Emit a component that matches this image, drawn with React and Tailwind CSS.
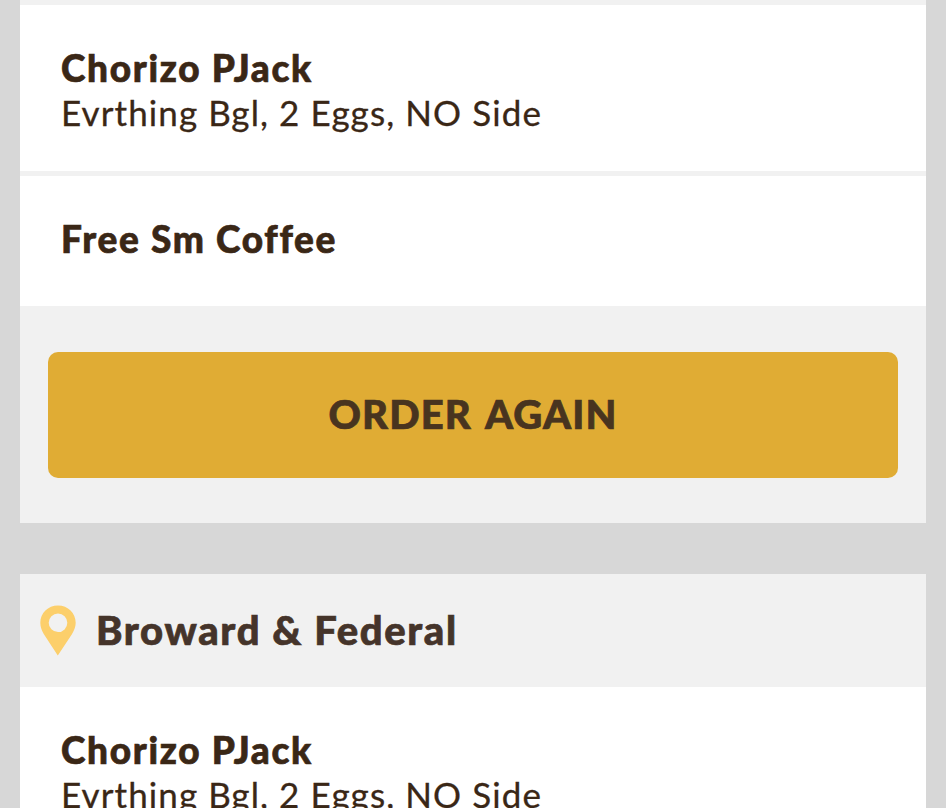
const orders = [
    {
        id: 1,
        items: [
            { name: "Chorizo PJack", details: "Evrthing Bgl, 2 Eggs, NO Side" },
            { name: "Free Sm Coffee" },
        ],
    },
    {
        id: 2,
        location: "Broward & Federal",
        items: [{ name: "Chorizo PJack", details: "Evrthing Bgl, 2 Eggs, NO Side" }],
    },
];

const PinIcon = () => (
    <svg viewBox="0 0 36 51" className="w-9 h-[51px] shrink-0" fill="#fccf6b">
        <path
            fillRule="evenodd"
            d="M18 .5C8 .5 .3 8 .3 17.8c0 4.200 1.500 7.800 3.600 11.400L17.800 50.500 31.900 29.200c2.100-3.600 3.800-7.200 3.800-11.400C35.700 8 28 .5 18 .5Zm0 8a9.300 9.300 0 1 1 0 18.600 9.300 9.300 0 0 1 0-18.600Z"
        />
    </svg>
);

const OrderItem = ({ item }) => (
    <div className="bg-white min-h-[130px] pl-[41px] pr-10 pt-[41px] pb-[37px]">
        <h3 className="text-[37px] leading-[44px] font-black tracking-[1.7px] [-webkit-text-stroke:0.7px]">
            {item.name}
        </h3>
        {item.details && (
            <p className="text-[35px] leading-[44px] tracking-[1.1px] [-webkit-text-stroke:0.3px]">{item.details}</p>
        )}
    </div>
);

const OrderCard = ({ order }) => (
    <section className="bg-[#f1f1f1]">
        {order.location && (
            <header className="flex items-center h-[113px] pl-5 gap-5 text-[#45342a]">
                <PinIcon />
                <h2 className="text-[40px] leading-[44px] font-black tracking-[1.65px] pb-[2px] [-webkit-text-stroke:0.7px]">
                    {order.location}
                </h2>
            </header>
        )}

        <div className="flex flex-col gap-[5px]">
            {order.items.map((item) => (
                <OrderItem key={item.name} item={item} />
            ))}
        </div>

        <div className="px-7 pt-[46px] pb-[45px]">
            <button className="block w-full h-[126px] pb-[3px] rounded-[10px] bg-[#e0ac34] text-[#48341f] text-[40px] font-black tracking-[1.1px] [word-spacing:4px] [-webkit-text-stroke:0.7px]">
                ORDER AGAIN
            </button>
        </div>
    </section>
);

const App = () => {
    return (
        <main className="h-screen overflow-hidden bg-[#d7d7d7] px-5 text-[#3a2716] font-['Lato',sans-serif]">
            <div className="h-[5px] bg-[#f1f1f1]" />
            <div className="flex flex-col gap-[51px]">
                {orders.map((order) => (
                    <OrderCard key={order.id} order={order} />
                ))}
            </div>
        </main>
    );
};

export default App;
